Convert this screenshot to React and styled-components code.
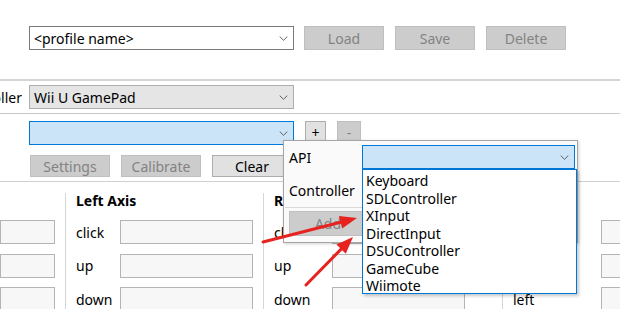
import React from 'react';
import styled, { createGlobalStyle } from 'styled-components';

const GlobalStyle = createGlobalStyle`
  html, body { margin: 0; padding: 0; background: #fff; overflow: hidden; }
  body {
    font-family: "Noto Sans", "Open Sans", sans-serif;
    font-size: 14px;
    color: #000;
  }
`;

const Window = styled.div`
  position: relative;
  width: 620px;
  height: 309px;
  overflow: hidden;
  background: #fff;
`;

const ProfileRow = styled.div`
  display: flex;
  align-items: flex-start;
  gap: 11px;
  height: 79px;
  box-sizing: border-box;
  padding: 26px 0 0 29px;
`;

const Rule = styled.div`
  height: ${p => p.$thick || 1}px;
  background: ${p => p.$color || '#d2d2d2'};
`;

const comboSkins = {
  white: { bg: '#fff', border: '#7a7a7a' },
  gray: { bg: '#e5e5e5', border: '#adadad' },
  blue: { bg: '#cce4f7', border: '#0078d7' },
};

const Combo = styled.div`
  display: flex;
  align-items: center;
  justify-content: space-between;
  box-sizing: border-box;
  width: ${p => p.$w || 265}px;
  height: 24px;
  padding: 0 5px 0 4px;
  background: ${p => comboSkins[p.$skin || 'white'].bg};
  border: 1px solid ${p => comboSkins[p.$skin || 'white'].border};
  white-space: nowrap;
  flex-shrink: 0;
`;

const Button = styled.div`
  display: flex;
  align-items: center;
  justify-content: center;
  box-sizing: border-box;
  width: ${p => p.$w || 80}px;
  height: ${p => p.$h || 24}px;
  margin-left: ${p => p.$ml || 0}px;
  background: ${p => (p.$off ? '#cccccc' : '#e1e1e1')};
  border: 1px solid ${p => (p.$off ? '#bfbfbf' : '#adadad')};
  color: ${p => (p.$off ? '#838383' : '#000')};
  flex-shrink: 0;
`;

const ControllerRow = styled.div`
  display: flex;
  align-items: center;
  height: 32px;
`;

const ClipLabel = styled.div`
  display: flex;
  justify-content: flex-end;
  width: 22px;
  margin-right: 7px;
  overflow: hidden;
  white-space: nowrap;
`;

const DeviceSection = styled.div`
  display: flex;
  flex-direction: column;
  gap: 10px;
  padding: 7px 0 4px 29px;
`;

const ButtonRow = styled.div`
  display: flex;
  align-items: flex-start;
  gap: ${p => p.$gap || 11}px;
`;

const Groups = styled.div`
  display: flex;
  padding-top: 11px;
`;

const Group = styled.div`
  box-sizing: border-box;
  width: ${p => p.$w}px;
  flex-shrink: 0;
  padding-left: ${p => p.$pl ?? 10}px;
  border-left: ${p => (p.$edge ? '1px solid #d6d6d6' : 'none')};
  display: flex;
  flex-direction: column;
  gap: 9.5px;
`;

const GroupTitle = styled.div`
  height: 16px;
  line-height: 16px;
  font-weight: 700;
  margin-bottom: 1.5px;
  white-space: nowrap;
`;

const FieldRow = styled.div`
  display: flex;
  align-items: center;
  height: 24px;
`;

const FieldLabel = styled.div`
  width: ${p => p.$w || 44}px;
  flex-shrink: 0;
`;

const Field = styled.div`
  box-sizing: border-box;
  width: ${p => p.$w}px;
  height: 24px;
  background: #f7f7f7;
  border: 1px solid #b4b4b4;
  flex-shrink: 0;
`;

const Popup = styled.div`
  position: absolute;
  left: 283px;
  top: 140px;
  width: 295px;
  height: 103px;
  box-sizing: border-box;
  padding: 4px 2px 0 4px;
  background: #fafafa;
  border: 1px solid #a6a6a6;
  box-shadow: 1px 1px 3px rgba(0, 0, 0, 0.18);
  display: flex;
  flex-direction: column;
`;

const PopupRow = styled.div`
  display: flex;
  align-items: center;
  height: 24px;
  margin-top: ${p => p.$mt || 0}px;
`;

const PopupLabel = styled.div`
  width: 74px;
  padding-left: 1px;
`;

const PopupRule = styled.div`
  height: 1px;
  margin: 5px 0 3px -3px;
  background: #d8d8d8;
`;

const ListBox = styled.div`
  position: absolute;
  left: 362px;
  top: 169px;
  width: 215px;
  height: 125px;
  box-sizing: border-box;
  padding: 2px 0 0 3px;
  background: #fff;
  border: 1px solid #0078d7;
  box-shadow: 2px 2px 3px rgba(0, 0, 0, 0.22);
`;

const ListItem = styled.div`
  height: 17.5px;
  line-height: 17.5px;
  white-space: nowrap;
`;

const Overlay = styled.svg`
  position: absolute;
  left: 0;
  top: 0;
  pointer-events: none;
`;

function Chevron() {
  return (
    <svg width="9" height="5" viewBox="0 0 9 5">
      <path d="M0.7 0.6 L4.5 4.3 L8.3 0.6" fill="none" stroke="#606060" strokeWidth="1" />
    </svg>
  );
}

function Arrow({ x1, y1, x2, y2 }) {
  const a = Math.atan2(y2 - y1, x2 - x1);
  const len = 17;
  const half = 6.5;
  const bx = x2 - Math.cos(a) * len;
  const by = y2 - Math.sin(a) * len;
  const px = -Math.sin(a) * half;
  const py = Math.cos(a) * half;
  return (
    <g>
      <line x1={x1} y1={y1} x2={bx} y2={by} stroke="#e8231f" strokeWidth="3" strokeLinecap="round" />
      <polygon points={`${x2},${y2} ${bx + px},${by + py} ${bx - px},${by - py}`} fill="#e8231f" />
    </g>
  );
}

const apis = ['Keyboard', 'SDLController', 'XInput', 'DirectInput', 'DSUController', 'GameCube', 'Wiimote'];

export default function App() {
  return (
    <Window>
      <GlobalStyle />
      <ProfileRow>
        <Combo $skin="white">&lt;profile name&gt;<Chevron /></Combo>
        <Button $off $ml={-1}>Load</Button>
        <Button $off>Save</Button>
        <Button $off>Delete</Button>
      </ProfileRow>
      <Rule $thick={2} $color="#d4d4d4" />
      <ControllerRow>
        <ClipLabel>Controller</ClipLabel>
        <Combo $skin="gray">Wii U GamePad<Chevron /></Combo>
      </ControllerRow>
      <Rule $color="#c8c8c8" />
      <DeviceSection>
        <ButtonRow $gap={11}>
          <Combo $skin="blue"><span /><Chevron /></Combo>
          <Button $w={21} $h={23}>+</Button>
          <Button $off $w={24} $h={23}>-</Button>
        </ButtonRow>
        <ButtonRow $gap={11}>
          <Button $off $h={22} $ml={1}>Settings</Button>
          <Button $off $h={22}>Calibrate</Button>
          <Button $h={22}>Clear</Button>
        </ButtonRow>
      </DeviceSection>
      <Rule $color="#d0d0d0" />
      <Groups>
        <Group $w={65} $pl={0}>
          <GroupTitle />
          <FieldRow><Field $w={55} /></FieldRow>
          <FieldRow><Field $w={55} /></FieldRow>
          <FieldRow><Field $w={55} /></FieldRow>
        </Group>
        <Group $w={198} $edge>
          <GroupTitle>Left Axis</GroupTitle>
          <FieldRow><FieldLabel $w={44}>click</FieldLabel><Field $w={133} /></FieldRow>
          <FieldRow><FieldLabel $w={44}>up</FieldLabel><Field $w={133} /></FieldRow>
          <FieldRow><FieldLabel $w={44}>down</FieldLabel><Field $w={133} /></FieldRow>
        </Group>
        <Group $w={239} $edge>
          <GroupTitle>Right Axis</GroupTitle>
          <FieldRow><FieldLabel $w={58}>click</FieldLabel><Field $w={133} /></FieldRow>
          <FieldRow><FieldLabel $w={58}>up</FieldLabel><Field $w={133} /></FieldRow>
          <FieldRow><FieldLabel $w={58}>down</FieldLabel><Field $w={133} /></FieldRow>
        </Group>
        <Group $w={130} $edge>
          <GroupTitle>D-pad</GroupTitle>
          <FieldRow><FieldLabel $w={88}>up</FieldLabel><Field $w={40} /></FieldRow>
          <FieldRow><FieldLabel $w={88}>down</FieldLabel><Field $w={40} /></FieldRow>
          <FieldRow><FieldLabel $w={88}>left</FieldLabel><Field $w={40} /></FieldRow>
        </Group>
      </Groups>

      <Popup>
        <PopupRow>
          <PopupLabel>API</PopupLabel>
          <Combo $skin="blue" $w={213}><span /><Chevron /></Combo>
        </PopupRow>
        <PopupRow $mt={9}>
          <PopupLabel>Controller</PopupLabel>
          <Combo $skin="white" $w={213}><span /><Chevron /></Combo>
        </PopupRow>
        <PopupRule />
        <Button $off $w={78} $h={25} $ml={1}>Add</Button>
      </Popup>

      <ListBox>
        {apis.map(a => <ListItem key={a}>{a}</ListItem>)}
      </ListBox>

      <Overlay width="620" height="309">
        <Arrow x1={263} y1={242} x2={357} y2={218} />
        <Arrow x1={306} y1={285} x2={353} y2={237} />
      </Overlay>
    </Window>
  );
}
